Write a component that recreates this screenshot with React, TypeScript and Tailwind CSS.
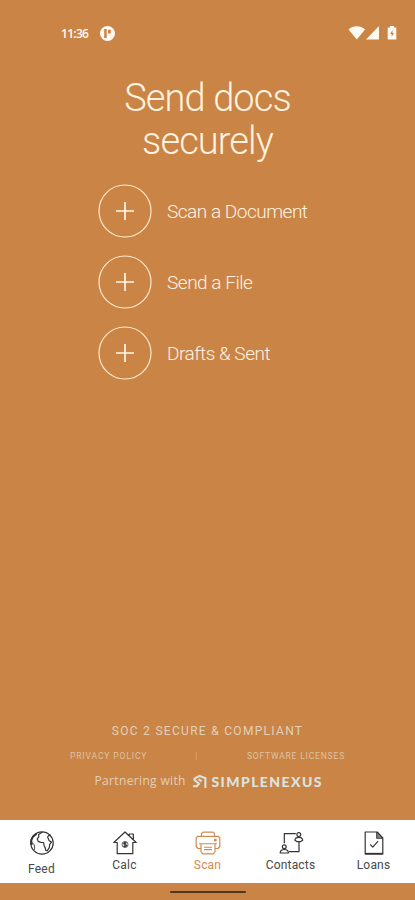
import type { ReactNode } from "react";

const actions = ["Scan a Document", "Send a File", "Drafts & Sent"];

interface NavItem {
  label: string;
  icon: ReactNode;
  active?: boolean;
  labelClass: string;
}

function NavIcon({ children }: { children: ReactNode }) {
  return (
    <svg
      width="26"
      height="26"
      viewBox="0 0 26 26"
      fill="none"
      stroke="currentColor"
      strokeWidth="1.2"
      strokeLinejoin="round"
    >
      {children}
    </svg>
  );
}

const navItems: NavItem[] = [
  {
    label: "Feed",
    labelClass: "mt-[5px]",
    icon: (
      <NavIcon>
        <circle cx="13" cy="13" r="11.2" />
        <path d="M7.5 3.8 4 6.6 2.3 10l.2 5" strokeWidth="2" />
        <path d="M13.5 2 9.6 4.6l.2 2.2-1.6 2 1 2.6 2.6 1 2.8.1.5 3.2 1.2 2.2.4 2.6 1.6.2 2-3 .3-3 1.8-2.6-2.2-1.4-1.6-3.7 1-1.4 2.2-.4" />
        <path d="m2.6 12.5 2.6 2 .5 3.6-.6 2" strokeWidth=".9" />
      </NavIcon>
    ),
  },
  {
    label: "Calc",
    labelClass: "mt-px",
    icon: (
      <NavIcon>
        <path d="M1.8 12.5 13 2l11.2 10.5h-3.4v11.2H5.2V12.5zM17.3 5.5V4h4v5.8" />
        <circle cx="13" cy="14.5" r="3" strokeWidth=".8" />
        <path d="M14.5 13.2c-.6-.8-2.8-.7-2.8.4 0 1.2 2.8.6 2.8 1.9 0 1-2.3 1.1-3 .3M13 12v5" />
      </NavIcon>
    ),
  },
  {
    label: "Scan",
    active: true,
    labelClass: "mt-px",
    icon: (
      <NavIcon>
        <path d="M6.5 6V3.5L8 2.2h10l1.5 1.3V6M5.5 18.5H3l-1.8-2V7.8L3 6.3h20l1.8 1.5v8.7l-1.8 2h-2.5M6 14v7.8l2 2h10l2-2V14" />
        <path d="M4 13.8h18M9 17.3h8M9 19.6h8" strokeWidth="1.1" />
        <path d="M19 8.8h2.6v2.6H19z" fill="currentColor" stroke="none" />
      </NavIcon>
    ),
  },
  {
    label: "Contacts",
    labelClass: "mt-px",
    icon: (
      <NavIcon>
        <path d="M17.8 3.6H6.3v9.6M11 21.7h10V11.8" />
        <circle cx="20.8" cy="4.6" r="1.9" />
        <path d="M16.9 10.2c.2-1.9 1.8-2.8 3.9-2.8s3.7.9 3.9 2.8l-2 1.4h-3.8z" />
        <circle cx="6.3" cy="16.7" r="1.9" />
        <path d="M2.2 23c0-2.4 1.7-3.5 4.1-3.5s4.1 1.1 4.1 3.5z" />
      </NavIcon>
    ),
  },
  {
    label: "Loans",
    labelClass: "mt-px",
    icon: (
      <NavIcon>
        <path d="M4.2 2h12l5.6 6v16H4.2zM15.8 2v6.2h6" />
        <path d="M16.2 2.4v5.2h4.6z" fill="currentColor" stroke="none" opacity=".6" />
        <path d="m9.2 14.3 2.6 2.8 5.3-6" />
        <path d="M4.2 23.7h17.6" strokeWidth="1.7" />
      </NavIcon>
    ),
  },
];

function StatusBar() {
  return (
    <div className="flex h-[66px] items-center justify-between pl-[61px] pr-[18px]">
      <div className="flex items-center gap-[11px]">
        <span className="w-7 whitespace-nowrap pt-px font-['Open_Sans',sans-serif] text-[12px] font-semibold tracking-[-0.7px]">
          11:36
        </span>
        <svg width="15" height="15" viewBox="0 0 15 15">
          <circle cx="7.5" cy="7.5" r="7.5" fill="#fffaf2" />
          <path d="M4.2 3h2.5v9H4.2zM8 3.8h2.8v3.8H8z" fill="#ca8445" />
        </svg>
      </div>
      <svg width="49" height="16" viewBox="0 0 49 16" fill="#fffaf2">
        <path d="M.5 4.4C5 .2 12.7.2 17 4.4L8.8 14.5zM31 1v13.5H18z" />
        <path d="M42 1h4v1.5h2.3v12h-8.6v-12H42z" />
        <path d="m44.5 5-2.3 4h1.5v3l2.2-4h-1.4z" fill="#ca8445" />
      </svg>
    </div>
  );
}

function ActionRow({ label }: { label: string }) {
  return (
    <button className="flex h-[54px] items-center gap-[15px] text-left">
      <svg
        className="shrink-0"
        width="54"
        height="54"
        viewBox="0 0 54 54"
        fill="none"
        stroke="#ffe9cc"
      >
        <circle cx="27" cy="27" r="26" strokeWidth="1.2" />
        <path d="M27 18v18M18 27h18" stroke="#fff7e5" strokeWidth="1.7" />
      </svg>
      <span className="whitespace-nowrap pt-[3px] text-[19px] font-light tracking-[-0.48px] text-[#fff2e2]">
        {label}
      </span>
    </button>
  );
}

function Footer() {
  return (
    <footer className="mt-auto flex flex-col items-center pb-[29px] text-[#e3d0b9]">
      <p className="text-[12px] leading-[18px] tracking-[1.3px]">
        SOC 2 SECURE &amp; COMPLIANT
      </p>
      <div className="mt-2 flex w-[275px] items-center whitespace-nowrap text-[8.5px] leading-4 text-[#dfc3a4]">
        <span className="w-[126px] tracking-[0.88px]">PRIVACY POLICY</span>
        <span className="w-[52px] font-light">|</span>
        <span className="tracking-[0.82px]">SOFTWARE LICENSES</span>
      </div>
      <div className="mt-[7px] flex h-5 w-[228px] items-center whitespace-nowrap pl-px">
        <span className="w-[98px] shrink-0 font-['Open_Sans',sans-serif] text-[12px] tracking-[0.35px]">
          Partnering with
        </span>
        <div className="flex shrink-0 items-center gap-[5px] text-[#d8e4e2]">
          <svg
            width="14"
            height="14"
            viewBox="0 0 14 14"
            fill="none"
            stroke="currentColor"
            strokeWidth="2.1"
          >
            <path d="M0 12.2h3.8L6 9.8 1.6 6V4.6L6.6 1.8l5.8 2.4V14M5.6 5.2l3 2.2" />
          </svg>
          <span className="pt-px font-['Lato',sans-serif] text-[14px] font-black leading-4 tracking-[1.4px]">
            SIMPLENEXUS
          </span>
        </div>
      </div>
    </footer>
  );
}

export default function App() {
  return (
    <div className="flex h-[900px] w-[415px] flex-col overflow-hidden bg-[#ca8445] font-['Roboto',sans-serif] text-[#fffaf2]">
      <StatusBar />
      <main className="flex flex-1 flex-col">
        <h1 className="mt-[11px] text-center text-[38px] font-light leading-[43px] tracking-[-0.9px] text-[#fff2df]">
          Send docs
          <br />
          securely
        </h1>
        <div className="ml-[98px] mt-[21px] flex flex-col gap-[17px]">
          {actions.map((label) => (
            <ActionRow key={label} label={label} />
          ))}
        </div>
        <Footer />
      </main>
      <nav className="grid h-[63px] grid-cols-5 bg-white">
        {navItems.map((item) => (
          <button
            key={item.label}
            className={`flex flex-col items-center pt-[10px] ${
              item.active ? "text-[#d18a50]" : "text-[#343434]"
            }`}
          >
            {item.icon}
            <span
              className={`text-[12px] leading-4 tracking-[0.2px] ${item.labelClass} ${
                item.active ? "" : "text-[#484848]"
              }`}
            >
              {item.label}
            </span>
          </button>
        ))}
      </nav>
      <div className="flex h-[17px] justify-center pt-2">
        <div className="h-[2px] w-[76px] rounded-full bg-[#50351f]" />
      </div>
    </div>
  );
}
